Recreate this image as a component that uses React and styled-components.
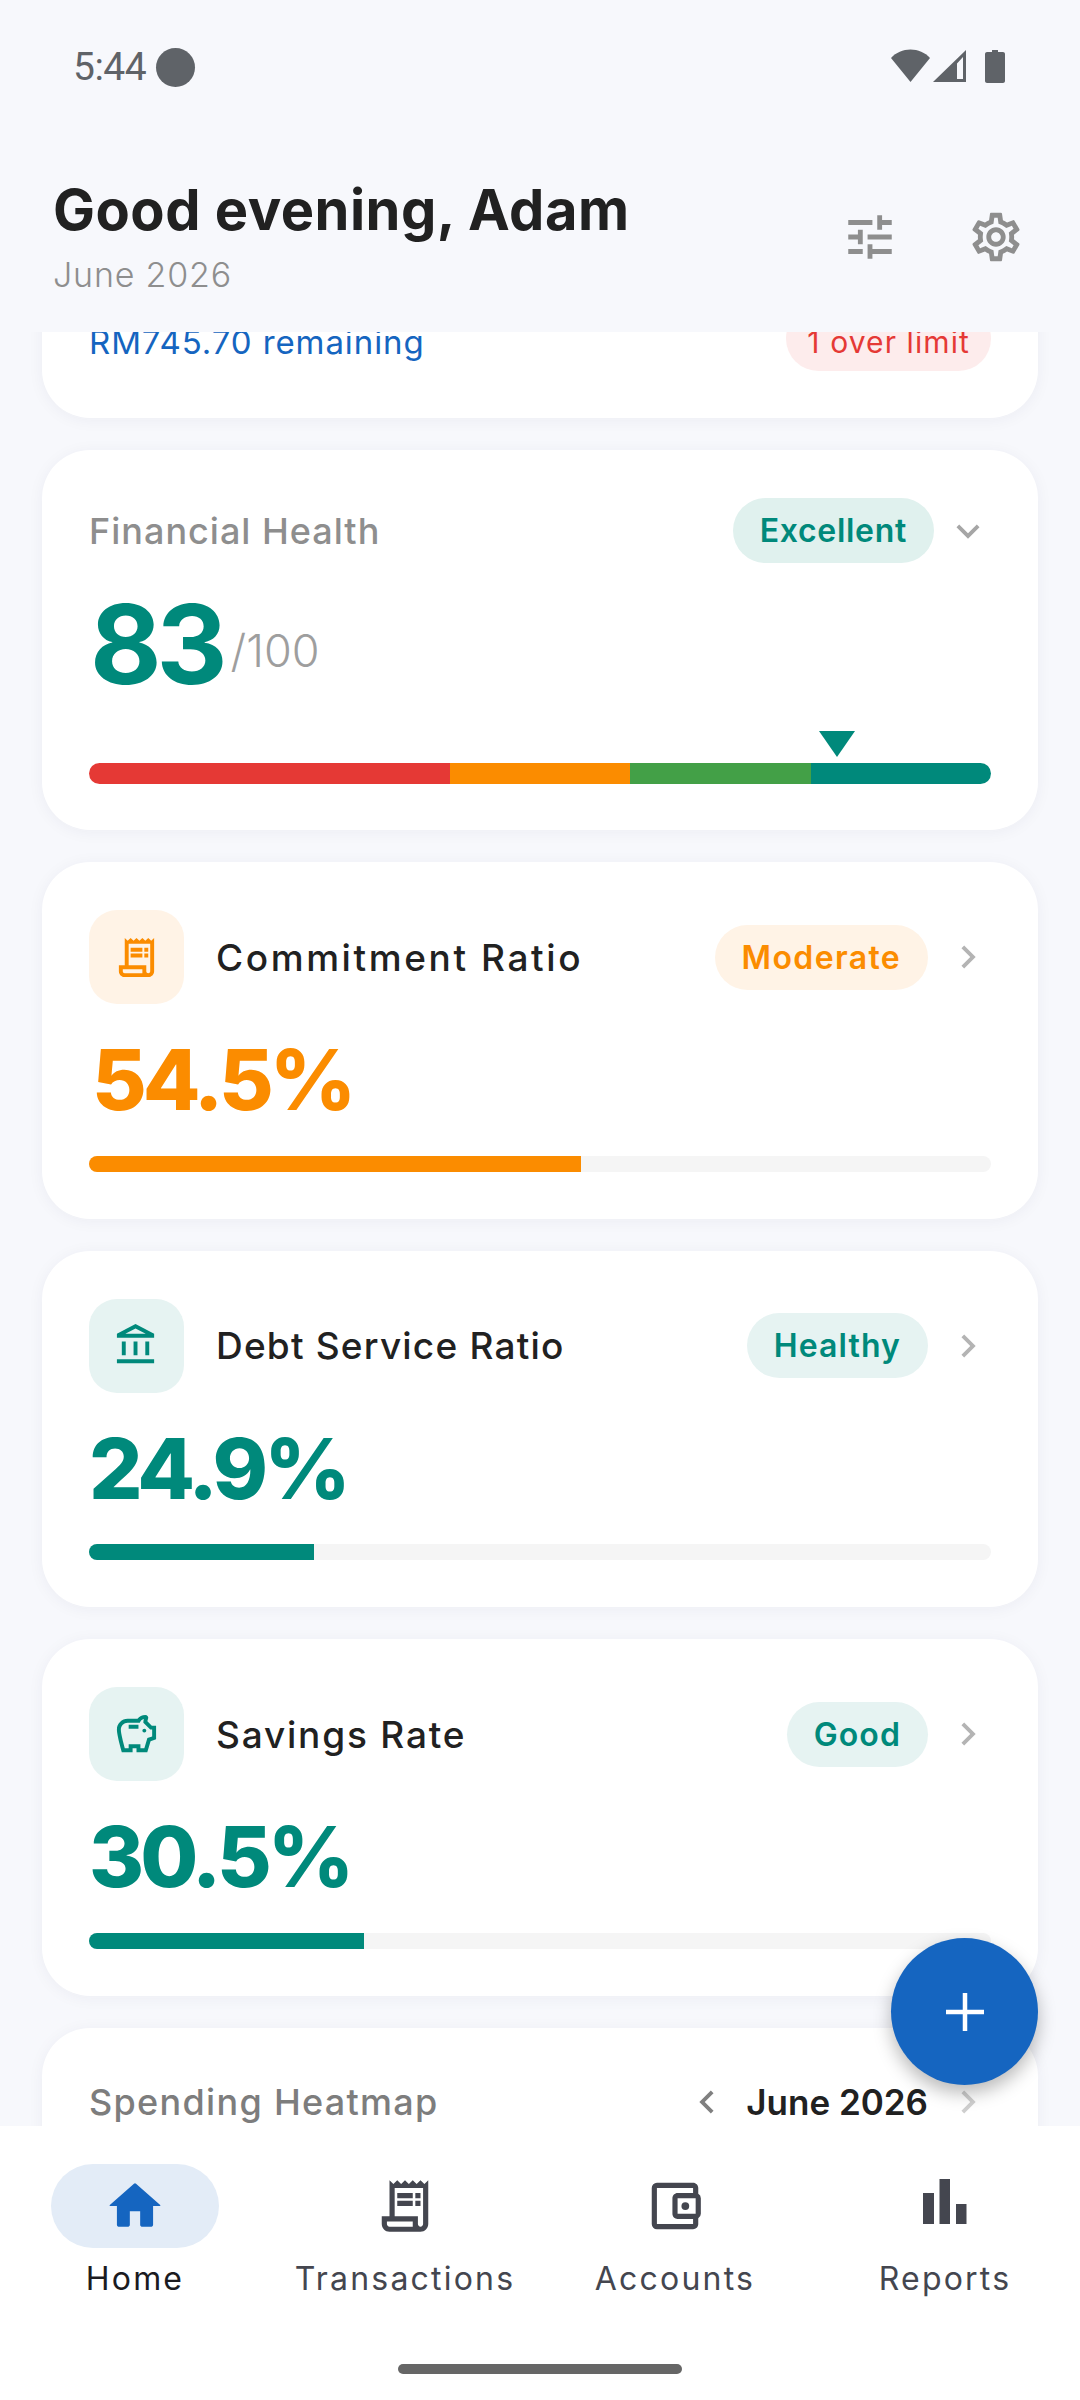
import React from 'react';
import styled, { createGlobalStyle } from 'styled-components';
import {
  MdOutlineTune,
  MdOutlineSettings,
  MdExpandMore,
  MdChevronRight,
  MdChevronLeft,
  MdOutlineReceiptLong,
  MdOutlineAccountBalance,
  MdOutlineSavings,
  MdOutlineAccountBalanceWallet,
} from 'react-icons/md';

const TEAL = '#00897B';
const ORANGE = '#FB8C00';
const BLUE = '#1565C0';
const NAV_GREY = '#44464F';

const GlobalStyle = createGlobalStyle`
  html, body {
    margin: 0;
    padding: 0;
    background: #f7f8fc;
  }
  * {
    box-sizing: border-box;
  }
`;

const Screen = styled.div`
  position: relative;
  width: 1080px;
  height: 2400px;
  display: flex;
  flex-direction: column;
  overflow: hidden;
  background: #f7f8fc;
  font-family: Inter, 'Liberation Sans', sans-serif;
`;

const StatusBar = styled.div`
  height: 132px;
  flex: none;
  padding: 47px 75px 0 73px;
  display: flex;
  justify-content: space-between;
  align-items: flex-start;
  color: #5f6368;
`;

const StatusLeft = styled.div`
  display: flex;
  align-items: center;
  gap: 10px;
  height: 40px;
  font-family: Roboto, sans-serif;
  font-size: 39px;
  letter-spacing: -0.5px;
`;

const StatusDot = styled.span`
  width: 39px;
  height: 39px;
  border-radius: 50%;
  background: #5f6368;
`;

const StatusIcons = styled.svg`
  display: block;
  margin-top: 2px;
`;

const Header = styled.header`
  height: 200px;
  flex: none;
  padding: 46px 55px 0 53px;
  display: flex;
  justify-content: space-between;
  align-items: flex-start;
`;

const Greeting = styled.h1`
  margin: 0;
  font-size: 56px;
  line-height: 64px;
  font-weight: 700;
  letter-spacing: 0.5px;
  color: #212121;
`;

const SubGreeting = styled.div`
  margin-top: 11px;
  font-size: 34px;
  line-height: 44px;
  font-weight: 300;
  letter-spacing: 0.8px;
  color: #8e8e8e;
`;

const HeaderActions = styled.div`
  display: flex;
  gap: 68px;
  margin-top: 30px;
  color: #8e8e8e;
  font-size: 58px;
  svg {
    display: block;
  }
`;

const Scroller = styled.main`
  flex: 1;
  min-height: 0;
  overflow: hidden;
  padding: 0 42px;
`;

/* list is scrolled, the first card sits partly under the header */
const CardList = styled.div`
  margin-top: -74px;
  display: flex;
  flex-direction: column;
  gap: 32px;
`;

const Card = styled.section`
  background: #fff;
  border-radius: 48px;
  padding: 48px 47px 47px;
  box-shadow: 0 2px 16px rgba(30, 40, 80, 0.05);
`;

const Row = styled.div`
  display: flex;
  align-items: center;
  justify-content: space-between;
`;

const RowRight = styled.div`
  display: flex;
  align-items: center;
`;

const Remaining = styled.span`
  padding-top: 6px;
  font-size: 33px;
  letter-spacing: 0.9px;
  color: ${BLUE};
`;

const Pill = styled.span`
  display: inline-flex;
  align-items: center;
  justify-content: center;
  height: 65px;
  padding: ${p => p.$lower || 0}px ${p => p.$pad || 27}px 0;
  border-radius: 33px;
  background: ${p => p.$bg};
  color: ${p => p.$color};
  font-size: ${p => p.$size || 32}px;
  font-weight: ${p => p.$weight || 600};
  letter-spacing: ${p => p.$tracking || 1.1}px;
`;

const CardLabel = styled.span`
  font-size: 36px;
  font-weight: 500;
  letter-spacing: ${p => p.$tracking || 1}px;
  color: ${p => p.$color || '#8e8e8e'};
`;

const Chevron = styled.span`
  display: flex;
  margin-left: ${p => p.$gap || 0}px;
  font-size: 46px;
  color: ${p => p.$color || '#b4b4b4'};
  svg {
    display: block;
  }
`;

const Score = styled.div`
  display: flex;
  align-items: center;
  gap: 8px;
  margin: 23px 0 0 1px;
  height: 116px;
  line-height: 116px;
`;

const ScoreValue = styled.span`
  font-size: 110px;
  font-weight: 700;
  letter-spacing: -5px;
  color: ${TEAL};
`;

const ScoreMax = styled.span`
  margin-top: 14px;
  font-size: 45px;
  font-weight: 300;
  color: #9e9e9e;
`;

const GaugeWrap = styled.div`
  position: relative;
  margin: 61px 0 -1px;
`;

const Gauge = styled.div`
  display: flex;
  height: 21px;
  border-radius: 11px;
  overflow: hidden;
`;

const GaugeSegment = styled.div`
  flex: ${p => p.$grow};
  background: ${p => p.$color};
`;

const GaugeMarker = styled.div`
  position: absolute;
  top: -32px;
  margin-left: -18.5px;
  width: 0;
  height: 0;
  border-left: 18.5px solid transparent;
  border-right: 18.5px solid transparent;
  border-top: 26px solid ${TEAL};
`;

const RatioTitle = styled.div`
  display: flex;
  align-items: center;
  gap: 32px;
`;

const IconBox = styled.div`
  width: 95px;
  height: 94px;
  border-radius: 28px;
  display: flex;
  align-items: center;
  justify-content: center;
  background: ${p => p.$bg};
  color: ${p => p.$color};
  font-size: 47px;
  svg {
    display: block;
  }
`;

const RatioName = styled.span`
  font-size: 37px;
  font-weight: 500;
  letter-spacing: ${p => p.$tracking}px;
  color: #212121;
`;

const RatioValue = styled.div`
  margin: 26px 0 0 ${p => p.$indent || 0}px;
  font-size: 84px;
  line-height: 100px;
  font-weight: 800;
  letter-spacing: -4px;
  color: ${p => p.$color};
`;

const Progress = styled.div`
  margin-top: 25.5px;
  height: 16px;
  border-radius: 8px;
  background: #f5f5f5;
  overflow: hidden;
`;

const ProgressFill = styled.div`
  height: 100%;
  background: ${p => p.$color};
`;

const MonthPicker = styled.div`
  display: flex;
  align-items: center;
  min-height: 52px;
`;

const MonthLabel = styled.span`
  margin: 0 17px 0 16px;
  font-size: 35px;
  font-weight: 600;
  color: #212121;
`;

const Fab = styled.button`
  position: absolute;
  right: 42px;
  top: 1938px;
  width: 147px;
  height: 147px;
  padding: 0;
  border: none;
  border-radius: 50%;
  background: ${BLUE};
  display: flex;
  align-items: center;
  justify-content: center;
  box-shadow: 0 8px 18px rgba(0, 0, 0, 0.28);
`;

const BottomNav = styled.nav`
  position: relative;
  height: 274px;
  flex: none;
  background: #fff;
  padding-top: 38px;
  display: grid;
  grid-template-columns: repeat(4, 270px);
  align-items: start;
`;

const NavItem = styled.div`
  display: flex;
  flex-direction: column;
  align-items: center;
  gap: 11px;
  color: ${p => (p.$active ? '#1b1b1f' : NAV_GREY)};
`;

const NavIcon = styled.div`
  width: 168px;
  height: 84px;
  border-radius: 42px;
  display: flex;
  align-items: center;
  justify-content: center;
  background: ${p => (p.$active ? '#E3ECF7' : 'transparent')};
  color: ${p => (p.$active ? BLUE : NAV_GREY)};
  font-size: 62px;
  svg {
    display: block;
  }
`;

const NavLabel = styled.span`
  font-size: 32px;
  line-height: 40px;
  font-weight: 400;
  letter-spacing: 2.2px;
`;

const HomeBar = styled.div`
  position: absolute;
  left: 398px;
  bottom: 26px;
  width: 284px;
  height: 10px;
  border-radius: 5px;
  background: #666;
`;

const HomeIcon = () => (
  <svg width="62" height="62" viewBox="0 0 24 24" fill="currentColor">
    <path d="M10 19.4V14h4v5.4c0 .33.27.6.6.6h3.8c.33 0 .6-.27.6-.6V12h2.6c.2 0 .3-.25.15-.38L12.4 3.36a.6.6 0 0 0-.8 0L2.25 11.62c-.15.13-.05.38.15.38H5v7.4c0 .33.27.6.6.6h3.8c.33 0 .6-.27.6-.6z" />
  </svg>
);

const BarsIcon = () => (
  <svg width="62" height="62" viewBox="0 0 62 62" fill="currentColor">
    <rect x="9" y="18" width="11" height="31" />
    <rect x="25.500" y="4" width="10.500" height="45" />
    <rect x="42" y="29" width="10.500" height="20" />
  </svg>
);

const RATIOS = [
  {
    name: 'Commitment Ratio',
    tracking: 2.6,
    status: 'Moderate',
    pillTracking: 1.35,
    value: 54.5,
    color: ORANGE,
    bg: '#FFF3E6',
    indent: 3,
    Icon: MdOutlineReceiptLong,
  },
  {
    name: 'Debt Service Ratio',
    tracking: 1.2,
    status: 'Healthy',
    value: 24.9,
    color: TEAL,
    bg: '#E6F3F2',
    indent: 0,
    Icon: MdOutlineAccountBalance,
  },
  {
    name: 'Savings Rate',
    tracking: 1.8,
    status: 'Good',
    value: 30.5,
    color: TEAL,
    bg: '#E6F3F2',
    indent: 0,
    Icon: MdOutlineSavings,
  },
];

const NAV_ITEMS = [
  { label: 'Home', icon: <HomeIcon />, active: true },
  { label: 'Transactions', icon: <MdOutlineReceiptLong /> },
  { label: 'Accounts', icon: <MdOutlineAccountBalanceWallet /> },
  { label: 'Reports', icon: <BarsIcon /> },
];

const App = () => (
  <>
    <GlobalStyle />
    <Screen>
      <StatusBar>
        <StatusLeft>
          5:44
          <StatusDot />
        </StatusLeft>
        <StatusIcons width="114" height="36" viewBox="0 0 114 36" fill="#5f6368">
          <path d="M0 9C5 3.500 12 0.500 19.500 0.500S34 3.500 39 9L19.500 33z" />
          <path fillRule="evenodd" d="M75 1v32H42zM72 8l-6 6.500V30h6z" />
          <path d="M96 3h5V1.500c0-.5.300-.5.500-.5h5c.2 0 .5 0 .5.500V3h5c1 0 2 .7 2 2v27c0 1-1 2-2 2H96c-1 0-2-1-2-2V5c0-1.300 1-2 2-2z" />
        </StatusIcons>
      </StatusBar>

      <Header>
        <div>
          <Greeting>Good evening, Adam</Greeting>
          <SubGreeting>June 2026</SubGreeting>
        </div>
        <HeaderActions>
          <MdOutlineTune />
          <MdOutlineSettings />
        </HeaderActions>
      </Header>

      <Scroller>
        <CardList>
          <Card>
            <Row>
              <Remaining>RM745.70 remaining</Remaining>
              <Pill $bg="#FDECEC" $color="#E53935" $size={30} $weight={400} $pad={21} $lower={6}>
                1 over limit
              </Pill>
            </Row>
          </Card>

          <Card>
            <Row>
              <CardLabel>Financial Health</CardLabel>
              <RowRight>
                <Pill $bg="#E0F1EE" $color={TEAL} $tracking={0.7}>
                  Excellent
                </Pill>
                <Chevron $gap={11} $color="#a6a6a6">
                  <MdExpandMore />
                </Chevron>
              </RowRight>
            </Row>
            <Score>
              <ScoreValue>83</ScoreValue>
              <ScoreMax>/100</ScoreMax>
            </Score>
            <GaugeWrap>
              <GaugeMarker style={{ left: '83%' }} />
              <Gauge>
                <GaugeSegment $grow={2} $color="#E53935" />
                <GaugeSegment $grow={1} $color={ORANGE} />
                <GaugeSegment $grow={1} $color="#43A047" />
                <GaugeSegment $grow={1} $color={TEAL} />
              </Gauge>
            </GaugeWrap>
          </Card>

          {RATIOS.map(({ name, tracking, status, pillTracking, value, color, bg, indent, Icon }) => (
            <Card key={name}>
              <Row>
                <RatioTitle>
                  <IconBox $bg={bg} $color={color}>
                    <Icon />
                  </IconBox>
                  <RatioName $tracking={tracking}>{name}</RatioName>
                </RatioTitle>
                <RowRight>
                  <Pill $bg={bg} $color={color} $tracking={pillTracking}>
                    {status}
                  </Pill>
                  <Chevron $gap={17}>
                    <MdChevronRight />
                  </Chevron>
                </RowRight>
              </Row>
              <RatioValue $color={color} $indent={indent}>
                {value}%
              </RatioValue>
              <Progress>
                <ProgressFill $color={color} style={{ width: `${value}%` }} />
              </Progress>
            </Card>
          ))}

          <Card>
            <Row>
              <CardLabel $color="#7d7d7d" $tracking={1.3}>
                Spending Heatmap
              </CardLabel>
              <MonthPicker>
                <Chevron $color="#808080">
                  <MdChevronLeft />
                </Chevron>
                <MonthLabel>June 2026</MonthLabel>
                <Chevron $color="#cfcfcf">
                  <MdChevronRight />
                </Chevron>
              </MonthPicker>
            </Row>
          </Card>
        </CardList>
      </Scroller>

      <BottomNav>
        {NAV_ITEMS.map(({ label, icon, active }) => (
          <NavItem key={label} $active={active}>
            <NavIcon $active={active}>{icon}</NavIcon>
            <NavLabel>{label}</NavLabel>
          </NavItem>
        ))}
        <HomeBar />
      </BottomNav>

      <Fab aria-label="Add">
        <svg width="38" height="38" viewBox="0 0 38 38" stroke="#fff" strokeWidth="4.500">
          <path d="M19 0v38M0 19h38" />
        </svg>
      </Fab>
    </Screen>
  </>
);

export default App;
